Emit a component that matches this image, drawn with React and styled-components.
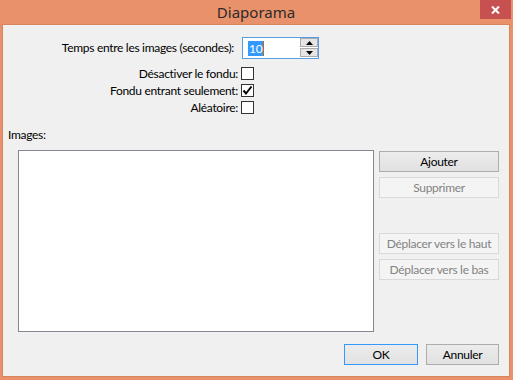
import React from 'react';
import styled, { createGlobalStyle } from 'styled-components';

const GlobalStyle = createGlobalStyle`
  html, body {
    margin: 0;
    padding: 0;
    overflow: hidden;
    background: #ffffff;
  }
  * {
    box-sizing: border-box;
  }
`;

const uiFont = `Lato, "Noto Sans", "Liberation Sans", sans-serif`;

const Window = styled.div`
  width: 513px;
  height: 380px;
  background: #e9916a;
  display: flex;
  flex-direction: column;
  padding: 0 3px 3px 2px;
  font-family: ${uiFont};
  font-size: 12px;
  letter-spacing: -0.3px;
  color: #000;
`;

const TitleBar = styled.div`
  height: 24px;
  flex: none;
  display: flex;
  justify-content: center;
  position: relative;
`;

const Title = styled.div`
  font-family: "Noto Sans", sans-serif;
  font-size: 15px;
  letter-spacing: 0;
  line-height: 24px;
  color: #2b2b2b;
`;

const CloseButton = styled.div`
  position: absolute;
  top: 0;
  right: -1px;
  width: 31px;
  height: 19px;
  background: #c75050;
  display: flex;
  align-items: center;
  justify-content: center;
`;

const Client = styled.div`
  flex: 1;
  background: #f0f0f0;
  border: 1px solid #d7855f;
  display: flex;
  flex-direction: column;
  padding: 12px 10px 0 0;
`;

const Form = styled.div`
  display: grid;
  grid-template-columns: 238px auto;
  grid-template-rows: 28px repeat(3, 17px);
  align-items: center;
`;

const FieldLabel = styled.div`
  text-align: right;
  white-space: nowrap;
  padding-right: ${p => p.$gap}px;
  line-height: 16px;
`;

const SpinLabel = styled(FieldLabel)`
  align-self: start;
  height: 22px;
  display: flex;
  align-items: center;
  justify-content: flex-end;
`;

const SpinBox = styled.div`
  align-self: start;
  width: 77px;
  height: 22px;
  margin-left: 1px;
  border: 1px solid #569de5;
  background: #fff;
  display: flex;
  align-items: stretch;
`;

const SpinValue = styled.div`
  flex: 1;
  display: flex;
  align-items: center;
  padding-left: 5px;
`;

const Selected = styled.span`
  background: #3399ff;
  color: #fff;
  line-height: 15px;
  padding: 0 1px;
  border-right: 1px solid #cc6600;
`;

const SpinButtons = styled.div`
  width: 18px;
  display: flex;
  flex-direction: column;
  padding: 0 0 1px 0;
  gap: 1px;
`;

const SpinArrow = styled.div`
  flex: 1;
  border: 1px solid #acacac;
  background: #e5e5e5;
  display: flex;
  align-items: center;
  justify-content: center;
`;

const Check = styled.div`
  width: 13px;
  height: 13px;
  border: 1px solid #333;
  background: #fff;
  display: flex;
  align-items: center;
  justify-content: center;
`;

const SectionLabel = styled.div`
  margin: 11px 0 0 5px;
  line-height: 16px;
`;

const ListArea = styled.div`
  display: flex;
  gap: 5px;
  margin: 7px 0 0 15px;
`;

const ListBox = styled.div`
  width: 356px;
  height: 182px;
  border: 1px solid #828790;
  background: #fff;
`;

const ButtonColumn = styled.div`
  flex: 1;
  display: flex;
  flex-direction: column;
  gap: 5px;
  padding-top: 1px;
`;

const Button = styled.div`
  width: ${p => p.$width || 120}px;
  height: 21px;
  display: flex;
  align-items: center;
  justify-content: center;
  white-space: nowrap;
  border: 1px solid ${p => (p.$default ? '#3399ff' : p.$disabled ? '#d9d9d9' : '#adadad')};
  background: ${p => (p.$disabled ? '#f4f4f4' : 'linear-gradient(#ececec, #e1e1e1)')};
  color: ${p => (p.$disabled ? '#838383' : '#000')};
  margin-top: ${p => p.$push || 0}px;
`;

const Footer = styled.div`
  display: flex;
  justify-content: flex-end;
  gap: 8px;
  margin-top: 12px;
`;

const Triangle = ({ down }) => (
  <svg width="7" height="4" viewBox="0 0 7 4">
    <path d={down ? 'M0 0 H7 L3.5 4 Z' : 'M0 4 H7 L3.5 0 Z'} fill="#000" />
  </svg>
);

const CheckMark = () => (
  <svg width="11" height="11" viewBox="0 0 11 11">
    <path d="M1.5 5.5 L4 8.5 L9.5 1.5" fill="none" stroke="#000" strokeWidth="2" />
  </svg>
);

const options = [
  { label: 'Désactiver le fondu:', checked: false },
  { label: 'Fondu entrant seulement:', checked: true },
  { label: 'Aléatoire:', checked: false },
];

export default function App() {
  return (
    <>
      <GlobalStyle />
      <Window>
        <TitleBar>
          <Title>Diaporama</Title>
          <CloseButton>
            <svg width="9" height="8" viewBox="0 0 9 8">
              <path d="M1 0.5 L8 7.5 M8 0.5 L1 7.5" stroke="#fff" strokeWidth="2" />
            </svg>
          </CloseButton>
        </TitleBar>
        <Client>
          <Form>
            <SpinLabel $gap={7}>Temps entre les images (secondes):</SpinLabel>
            <SpinBox>
              <SpinValue>
                <Selected>10</Selected>
              </SpinValue>
              <SpinButtons>
                <SpinArrow><Triangle /></SpinArrow>
                <SpinArrow><Triangle down /></SpinArrow>
              </SpinButtons>
            </SpinBox>
            {options.map(o => (
              <React.Fragment key={o.label}>
                <FieldLabel $gap={3}>{o.label}</FieldLabel>
                <Check>{o.checked && <CheckMark />}</Check>
              </React.Fragment>
            ))}
          </Form>
          <SectionLabel>Images:</SectionLabel>
          <ListArea>
            <ListBox />
            <ButtonColumn>
              <Button>Ajouter</Button>
              <Button $disabled>Supprimer</Button>
              <Button $disabled $push={30}>Déplacer vers le haut</Button>
              <Button $disabled>Déplacer vers le bas</Button>
            </ButtonColumn>
          </ListArea>
          <Footer>
            <Button $width={74} $default>OK</Button>
            <Button $width={73}>Annuler</Button>
          </Footer>
        </Client>
      </Window>
    </>
  );
}
